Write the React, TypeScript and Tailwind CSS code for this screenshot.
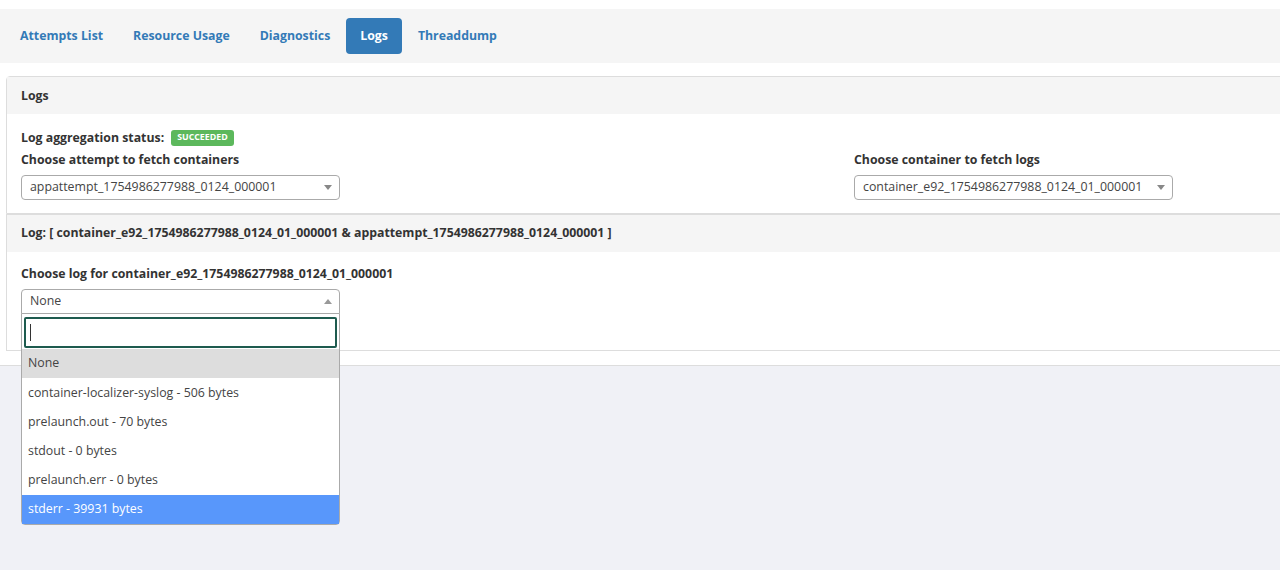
import { useState } from 'react'

const tabs = ['Attempts List', 'Resource Usage', 'Diagnostics', 'Logs', 'Threaddump']

const logOptions = [
  'None',
  'container-localizer-syslog - 506 bytes',
  'prelaunch.out - 70 bytes',
  'stdout - 0 bytes',
  'prelaunch.err - 0 bytes',
  'stderr - 39931 bytes',
]

function Caret({ up = false }: { up?: boolean }) {
  return (
    <svg width="8" height="5" viewBox="0 0 8 5" className="shrink-0">
      {up ? <path d="M0 5 L4 0 L8 5 Z" fill="#999" /> : <path d="M0 0 L8 0 L4 5 Z" fill="#888" />}
    </svg>
  )
}

function SelectBox({ value, open = false }: { value: string; open?: boolean }) {
  return (
    <div
      className={`w-[319px] h-[25px] border border-[#aaa] bg-white flex items-center justify-between pl-[8px] pr-[7px] text-[12.35px] text-[#444] ${
        open ? 'rounded-t-[4px]' : 'rounded-[4px]'
      }`}
    >
      <span className="truncate">{value}</span>
      <Caret up={open} />
    </div>
  )
}

export default function App() {
  const [active] = useState('Logs')
  const container = 'container_e92_1754986277988_0124_01_000001'
  const attempt = 'appattempt_1754986277988_0124_000001'

  return (
    <div className="w-[1280px] h-[570px] overflow-hidden bg-[#f0f1f6] font-['Open_Sans',sans-serif] text-[#333]">
      <div className="bg-white pt-[9px] border-b border-[#ddd]">
        <div className="h-[54px] bg-[#f5f5f5] flex items-center pl-[6px]">
          {tabs.map((t) => (
            <div
              key={t}
              className={`px-[14px] h-[36px] flex items-center rounded-[4px] mr-[2px] text-[12.3px] font-bold ${
                t === active ? 'bg-[#337ab7] text-white' : 'text-[#337ab7]'
              }`}
            >
              {t}
            </div>
          ))}
        </div>

        <div className="pt-[13px] pb-[14px] pl-[6px]">
          <div className="w-[1700px]">
            {/* panel 1 */}
            <div className="border border-[#ddd] rounded-tl-[4px] bg-white">
              <div className="h-[37px] bg-[#f5f5f5] flex items-center px-[14px] pt-[1px] text-[12.3px] font-bold">Logs</div>
              <div className="px-[14px] pt-[13px] pb-[13px] flex">
                <div className="w-[833px]">
                  <div className="flex items-center h-[22px] text-[12.3px] font-bold">
                    Log aggregation status:
                    <span className="ml-[7px] bg-[#5cb85c] text-white text-[8.8px] font-bold rounded-[3px] px-[6px] h-[16px] flex items-center">
                      SUCCEEDED
                    </span>
                  </div>
                  <div className="text-[12.3px] font-bold h-[22px] flex items-center">
                    Choose attempt to fetch containers
                  </div>
                  <div className="mt-[4px]">
                    <SelectBox value={attempt} />
                  </div>
                </div>
                <div className="pt-[22px]">
                  <div className="text-[12.3px] font-bold h-[22px] flex items-center">Choose container to fetch logs</div>
                  <div className="mt-[4px]">
                    <SelectBox value={container} />
                  </div>
                </div>
              </div>
            </div>

            {/* panel 2 */}
            <div className="border border-[#ddd] bg-white">
              <div className="h-[37px] bg-[#f5f5f5] flex items-center px-[14px] text-[12.3px] font-bold">
                Log: [ {container} &amp; {attempt} ]
              </div>
              <div className="px-[14px] pt-[12px] pb-[36px]">
                <div className="text-[12.3px] font-bold h-[20px] flex items-center">Choose log for {container}</div>
                <div className="mt-[5px] relative">
                  <SelectBox value="None" open />
                  <div className="absolute left-0 top-[24px] w-[319px] bg-white border border-[#aaa] rounded-b-[4px] z-10">
                    <div className="px-[2px] pt-[3px] pb-[1px]">
                      <div className="h-[31px] border-2 border-[#1e5b4f] rounded-[2px] flex items-center pl-[4px]">
                        <span className="w-[1px] h-[17px] bg-[#333]" />
                      </div>
                    </div>
                    {logOptions.map((o, i) => (
                      <div
                        key={o}
                        className={`h-[29.2px] flex items-center px-[6px] text-[12.35px] ${
                          i === 0
                            ? 'bg-[#ddd] text-[#444]'
                            : i === logOptions.length - 1
                            ? 'bg-[#5897fb] text-white'
                            : 'text-[#444]'
                        }`}
                      >
                        {o}
                      </div>
                    ))}
                  </div>
                </div>
              </div>
            </div>
          </div>
        </div>
      </div>
    </div>
  )
}
